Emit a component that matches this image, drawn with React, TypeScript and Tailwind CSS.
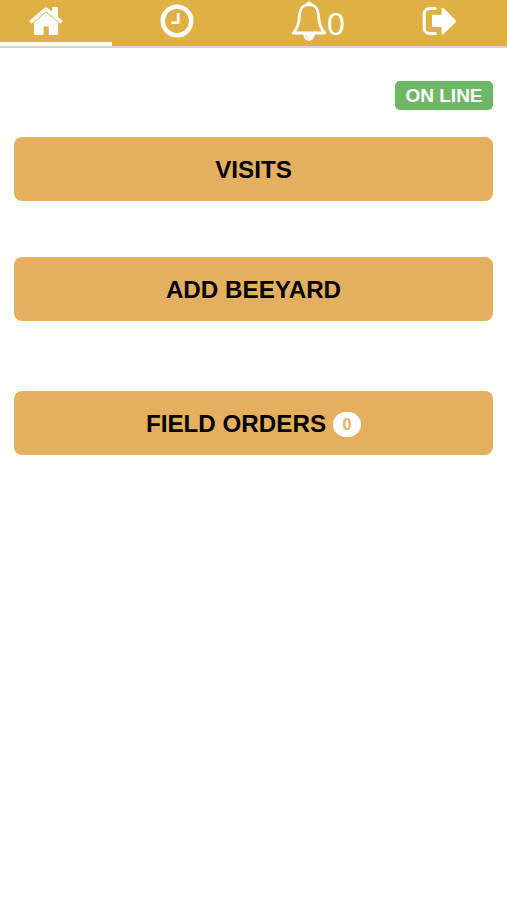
import type { ReactNode } from "react";

function HomeIcon() {
    return (
        <svg width="34" height="30" viewBox="0 0 34 30" fill="currentColor">
            <path d="M17 6.6 5 16.600V27.600c0 .8.600 1.400 1.400 1.400h8.100v-8.600h5.300V29h8c.8 0 1.400-.6 1.400-1.400V16.600L17 6.600Z" />
            <path d="M33.300 14.500 29 10.800V1.800c0-.6-.3-.9-.9-.9H24c-.6 0-.9.3-.9.9v4L19 2.200c-1.200-1-2.800-1-4 0L.7 14.500c-.4.3-.4.800-.1 1.200l1.200 1.400c.3.400.8.400 1.200.1L17 5.400l14 11.800c.4.300.9.300 1.200-.1l1.200-1.400c.3-.4.3-.9-.1-1.200Z" />
        </svg>
    );
}

function ClockIcon() {
    return (
        <svg width="34" height="34" viewBox="0 0 34 34" fill="none" stroke="currentColor">
            <circle cx="17" cy="17" r="14.200" strokeWidth="4.600" />
            <path d="M18.200 9v9.700h-6.700" strokeWidth="2.700" strokeLinejoin="round" />
        </svg>
    );
}

function BellIcon() {
    return (
        <svg width="36" height="42" viewBox="0 0 36 42" fill="none" stroke="currentColor">
            <path d="M18 4.700c-6 0-9.300 4.300-9.500 10.300-.3 8.200-1.500 13.200-6.200 18h31.400c-4.700-4.800-5.900-9.800-6.200-18C27.300 9 24 4.700 18 4.700Z" strokeWidth="2.800" strokeLinejoin="round" />
            <circle cx="18" cy="3.700" r="2.500" fill="currentColor" stroke="none" />
            <path d="M12.300 34h11.400c0 4-2.400 6.800-5.700 6.800s-5.700-2.800-5.700-6.800Z" fill="currentColor" stroke="none" />
            <path d="M14.500 35.200c.2 2.100 1.300 3.400 3 3.800" stroke="#dfb044" strokeWidth=".8" />
        </svg>
    );
}

function LogoutIcon() {
    return (
        <svg width="35" height="30" viewBox="0 0 35 30" fill="none">
            <path d="M13.300 2.500H8C4.700 2.500 2.200 4.800 2.200 8v14c0 3.200 2.500 5.500 5.800 5.500h5.300" stroke="currentColor" strokeWidth="3" strokeLinecap="round" />
            <path d="M33.500 14 21.500 2.100c-.7-.7-1.900-.3-1.900.7v6h-8.400c-.7 0-1.200.5-1.200 1.200v9.700c0 .7.500 1.200 1.200 1.200h8.400v6.500c0 1 1.200 1.400 1.900.7l12-11.700c.7-.700.7-1.700 0-2.400Z" fill="currentColor" />
        </svg>
    );
}

function MenuButton({ children }: { children: ReactNode }) {
    return (
        <button className="flex h-16 w-full items-center justify-center gap-[7px] rounded-lg bg-[#e5af60] pt-[3px] text-[24.2px] font-bold leading-none text-black">
            {children}
        </button>
    );
}

export default function App() {
    return (
        <div className="min-h-screen w-full bg-white font-['Liberation_Sans',Arial,sans-serif]">
            <nav className="h-12 border-b-2 border-[#d5d3d1] bg-[#dfb044] text-white">
                <div className="flex h-[42px]">
                    <div className="w-[131px] pl-[29px] pt-1.5">
                        <HomeIcon />
                    </div>
                    <div className="w-[131px] pl-[29px] pt-1">
                        <ClockIcon />
                    </div>
                    <div className="flex w-[131px] pl-[29px]">
                        <BellIcon />
                        <span className="pt-2 text-[32px] leading-8">0</span>
                    </div>
                    <div className="pl-[29px] pt-1.5">
                        <LogoutIcon />
                    </div>
                </div>
                <div className="h-1 w-28 bg-white" />
            </nav>

            <main className="px-3.5 pt-[33px]">
                <div className="flex justify-end">
                    <span className="flex h-[29px] w-[98px] items-center justify-center rounded-[5px] bg-[#6eb765] text-[19px] font-bold leading-none text-white">
                        ON LINE
                    </span>
                </div>
                <div className="mt-[27px]">
                    <MenuButton>VISITS</MenuButton>
                </div>
                <div className="mt-14">
                    <MenuButton>ADD BEEYARD</MenuButton>
                </div>
                <div className="mt-[70px]">
                    <MenuButton>
                        FIELD ORDERS
                        <span className="flex h-[25px] w-7 items-center justify-center rounded-full bg-white text-base text-[#e5af60]">0</span>
                    </MenuButton>
                </div>
            </main>
        </div>
    );
}
